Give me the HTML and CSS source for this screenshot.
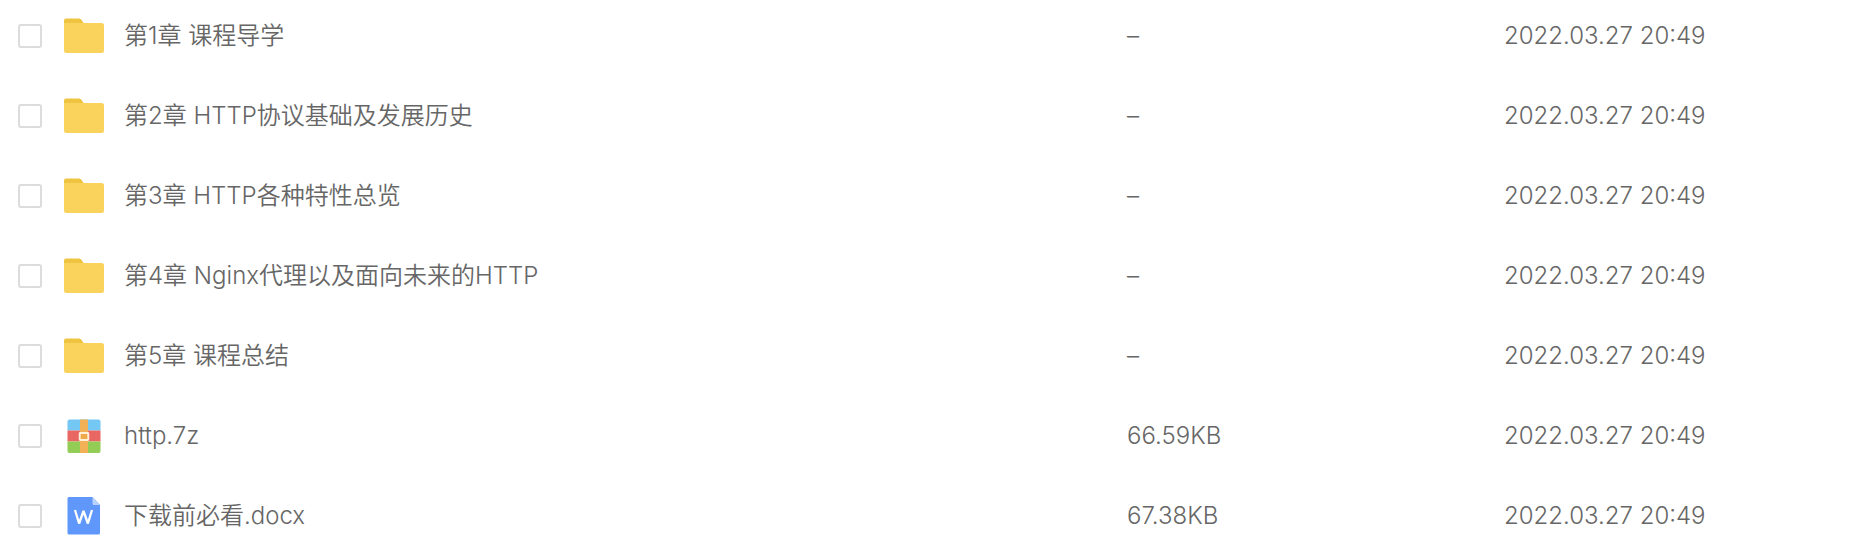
FILE: index.html
```
<!DOCTYPE html>
<html lang="zh-CN">
<head>
<meta charset="utf-8">
<title>课程文件</title>
<link rel="stylesheet" href="styles.css">
</head>
<body>
<svg class="sprite" aria-hidden="true">
  <symbol id="folder" viewBox="0 0 40 40">
    <path fill="#efc440" d="M0 4.500a2 2 0 0 1 2-2h12c2 0 3 .6 4 2l2.500 4v6H0z"/>
    <path fill="#fad35c" d="M0 7h37.500A2.500 2.500 0 0 1 40 9.500v25a2.500 2.500 0 0 1-2.500 2.500h-35A2.500 2.500 0 0 1 0 34.500z"/>
  </symbol>
  <symbol id="archive" viewBox="0 0 40 40">
    <path fill="#74c6f3" d="M5.500 3.500h29a2 2 0 0 1 2 2v9h-33v-9a2 2 0 0 1 2-2z"/>
    <path fill="#e96762" d="M3.500 14.500h33v11h-33z"/>
    <path fill="#93cd55" d="M3.500 25.500h33v9.500a2 2 0 0 1-2 2h-29a2 2 0 0 1-2-2z"/>
    <path fill="#f3b157" d="M16 3.500h8V37h-8z"/>
    <rect x="15.700" y="17" width="8.600" height="7" rx=".5" fill="#efab4a" stroke="#fff0d9" stroke-width="1.900"/>
  </symbol>
  <symbol id="word" viewBox="0 0 40 40">
    <path fill="#5f98fa" d="M5 1h23.500l7.500 8v28a1.500 1.500 0 0 1-1.500 1.500H5A1.500 1.500 0 0 1 3.500 37V2.500A1.500 1.500 0 0 1 5 1z"/>
    <path fill="#b9d3fd" d="M28.500 1l7.500 8h-6a1.500 1.500 0 0 1-1.500-1.500z"/>
    <path fill="none" stroke="#fff" stroke-width="2.300" stroke-linejoin="bevel" d="M11 14l4.100 13.500 4.400-12.500 4.400 12.500 4.100-13.500"/>
  </symbol>
</svg>
<table class="files">
  <colgroup><col class="col-check"><col class="col-name"><col class="col-size"><col class="col-date"></colgroup>
  <tbody>
    <tr><td><input class="check" type="checkbox" id="f1"></td><td><label class="name" for="f1"><svg class="icon"><use href="#folder"/></svg>第1章 课程导学</label></td><td>–</td><td>2022.03.27 20:49</td></tr>
    <tr><td><input class="check" type="checkbox" id="f2"></td><td><label class="name" for="f2"><svg class="icon"><use href="#folder"/></svg>第2章 HTTP协议基础及发展历史</label></td><td>–</td><td>2022.03.27 20:49</td></tr>
    <tr><td><input class="check" type="checkbox" id="f3"></td><td><label class="name" for="f3"><svg class="icon"><use href="#folder"/></svg>第3章 HTTP各种特性总览</label></td><td>–</td><td>2022.03.27 20:49</td></tr>
    <tr><td><input class="check" type="checkbox" id="f4"></td><td><label class="name" for="f4"><svg class="icon"><use href="#folder"/></svg>第4章 Nginx代理以及面向未来的HTTP</label></td><td>–</td><td>2022.03.27 20:49</td></tr>
    <tr><td><input class="check" type="checkbox" id="f5"></td><td><label class="name" for="f5"><svg class="icon"><use href="#folder"/></svg>第5章 课程总结</label></td><td>–</td><td>2022.03.27 20:49</td></tr>
    <tr><td><input class="check" type="checkbox" id="f6"></td><td><label class="name" for="f6"><svg class="icon"><use href="#archive"/></svg>http.7z</label></td><td>66.59KB</td><td>2022.03.27 20:49</td></tr>
    <tr><td><input class="check" type="checkbox" id="f7"></td><td><label class="name" for="f7"><svg class="icon"><use href="#word"/></svg>下载前必看.docx</label></td><td>67.38KB</td><td>2022.03.27 20:49</td></tr>
  </tbody>
</table>
</body>
</html>
```
FILE: styles.css
```
body {
  margin: 0;
  overflow: hidden;
  background: #fff;
  color: #666;
  font: 350 24px/32px Inter, "Noto Sans CJK SC", sans-serif;
}

.sprite {
  display: none;
}

.files {
  width: 100%;
  margin-top: -4px;
  border-collapse: collapse;
  table-layout: fixed;
}

.files td {
  height: 80px;
  padding: 0;
  vertical-align: middle;
  white-space: nowrap;
}

.col-check { width: 64px; }
.col-size { width: 377px; }
.col-date { width: 354px; }

.check {
  display: block;
  box-sizing: border-box;
  width: 24px;
  height: 24px;
  margin: 0 0 0 18px;
  appearance: none;
  background: #fff;
  border: 2px solid #dcdcdc;
  border-radius: 3px;
}

.check:checked {
  background: #5f98fa;
  border-color: #5f98fa;
}

.name {
  display: flex;
  align-items: center;
  gap: 20px;
}

.icon {
  flex: none;
  width: 40px;
  height: 40px;
}
```
